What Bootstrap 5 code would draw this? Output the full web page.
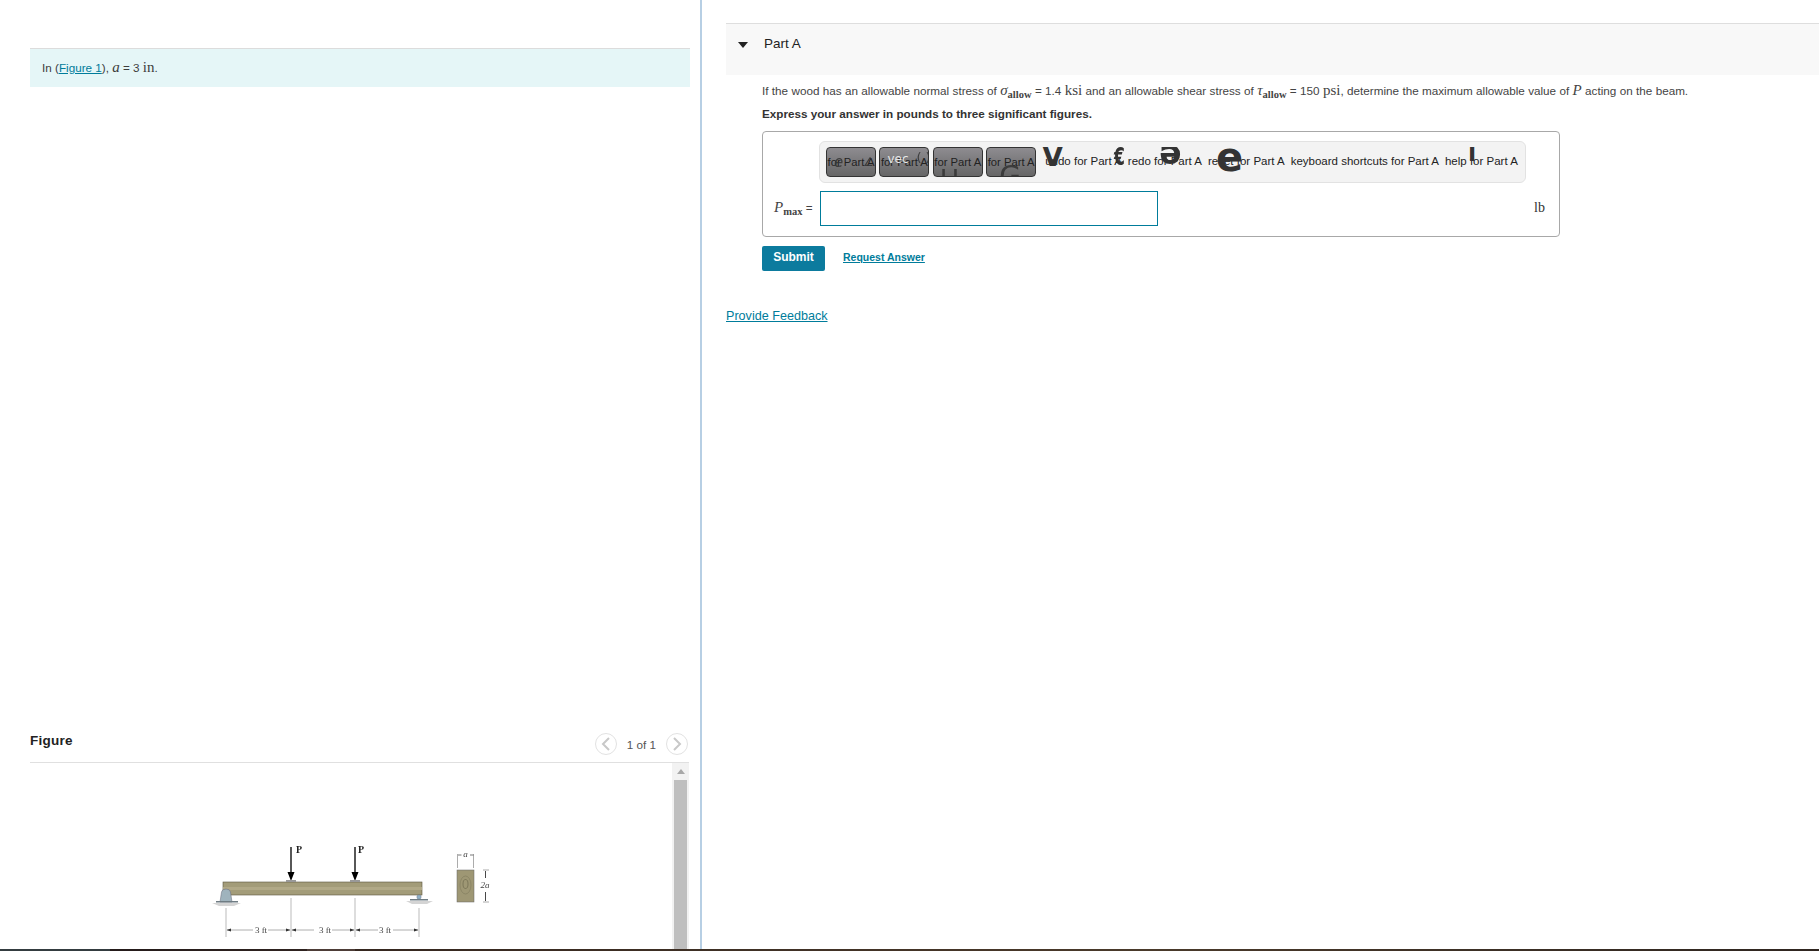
<!DOCTYPE html>
<html lang="en">
<head>
<meta charset="utf-8">
<title>Part A</title>
<link href="https://cdn.jsdelivr.net/npm/bootstrap@5.3.0/dist/css/bootstrap.min.css" rel="stylesheet">
<style>
html,body{height:951px;overflow:hidden;background:#fff;}
body{font-family:"Liberation Sans",Arial,sans-serif;font-size:11.7px;color:#3d3d3d;}
a{color:#007c9b;}
.mth{font-family:"Liberation Serif",serif;font-size:15px;}
.mth i{font-style:italic;}
.mth sub{font-size:10.5px;font-weight:bold;bottom:-.3em;}
.page-wrap{height:951px;}
.main-zone{height:949px;}
.base-strip{height:2px;background:linear-gradient(90deg,#343c40 0,#343c40 110px,#241b1a 110px,#2f2320 307px,#4d3d37 307px,#4d3d37 355px,#35271f 355px,#4a3a2b 1150px,#2f2620 1819px);}
.left-pane{width:702px;border-right:2px solid #b7cfe4;padding:48px 10px 0 30px;}
.intro-band{height:39px;background:#e5f6f7;border-top:1px solid #dcdcdc;padding:0 12px 2px;}
.fig-head{height:30px;border-bottom:1px solid #e0e0e0;padding:0 1px 7px 0;margin-right:1px;}
.fig-title{font-size:13.5px;font-weight:bold;color:#222;letter-spacing:.25px;margin-bottom:5px;}
.circle-nav{width:22px;height:22px;border:1px solid #e2e2e2;border-radius:50%;background:#fff;}
.page-count{margin:2px 2px 0;color:#555;}
.fig-body{height:186px;}
.beam-svg{width:300px;height:186px;margin-left:170px;filter:blur(.4px);}
.beam-svg text{font-family:"Liberation Serif",serif;fill:#444;}
.side-track{width:17px;margin-right:1px;padding:0 2px;background:#f2f2f2;}
.track-arrow{height:17px;}
.track-thumb{background:#bfbfbf;}
.right-pane{padding:23px 0 0 24px;}
.part-head{height:52px;background:#f8f8f8;border-top:1px solid #dedede;padding:0 0 10px 12px;font-size:13.5px;color:#222;}
.part-tri{width:0;height:0;border-left:5px solid transparent;border-right:5px solid transparent;border-top:6px solid #222;margin-right:16px;}
.part-body{padding-left:36px;}
.task-line{height:24px;line-height:30px;color:#444;word-spacing:.12px;}
.task-bold{height:24px;font-weight:bold;line-height:30px;color:#333;}
.answer-box{width:798px;height:106px;margin-top:8px;border:1px solid #a8a8a8;border-radius:4px;padding:9px 14px 0 11px;}
.tool-strip{width:707px;height:42px;margin-left:45px;padding:5px 6px;background:#f3f3f3;border:1px solid #e2e2e2;border-radius:6px;}
.tool-row{height:30px;overflow:hidden;gap:3.4px;}
.tool-cell{height:30px;flex-shrink:0;color:#222;white-space:nowrap;line-height:28px;font-size:11.5px;}
.tool-key{width:50px;border:1px solid #333;border-radius:4px;background:linear-gradient(#8e8c90,#666);text-align:center;overflow:hidden;font-size:11.25px;}
.tool-plain{margin-right:2.6px;}
.tool-first{margin-left:5.6px;}
.tool-glyph{position:absolute;font-family:"DejaVu Sans",sans-serif;font-weight:bold;line-height:1;color:#333;}
.glyph-soft{font-weight:normal;color:#333;opacity:.85;}
.glyph-white{font-weight:normal;color:#e6e6e6;}
.glyph-narrow{transform:scaleX(.65);}
.glyph-flip{transform:rotate(180deg);}
.answer-row{margin-top:8px;height:35px;}
.var-label{width:46px;color:#444;margin-bottom:2px;}
.var-field{width:338px;height:35px;border:1px solid #007c9b;border-radius:0;padding:0 6px;}
.unit-mark{font-family:"Liberation Serif",serif;font-size:14px;color:#333;margin-bottom:2px;}
.act-row{margin-top:9px;}
.send-btn{width:63px;height:25px;padding:0 0 4px;border:0;border-radius:2px;background:#0c7b9e;color:#fff;font-size:12px;font-weight:bold;}
.ask-link{margin:0 0 2px 18px;font-size:10.5px;font-weight:bold;}
.feedback-link{display:inline-block;margin-top:36px;font-size:12.6px;}
.g-a{left:7px;top:7px;font-size:15px;font-style:italic;}
.g-b{left:36px;top:8px;font-size:12px;}
.g-c{left:7px;top:5px;font-size:12px;}
.g-d{left:36px;top:3px;font-size:13px;}
.g-e{left:6px;top:19px;font-size:26px;}
.g-f{left:12px;top:15px;font-size:28px;}
.g-g{left:-3px;top:-4px;font-size:27px;}
.g-h{left:-17px;top:-2px;font-size:24px;}
.g-i{left:31px;top:-7px;font-size:33px;}
.g-j{left:8px;top:-10px;font-size:40px;}
.g-k{left:23px;top:-4px;font-size:22px;}
</style>
</head>
<body class="m-0">
<div class="page-wrap d-flex flex-column">
  <div class="main-zone d-flex">
    <section class="left-pane d-flex flex-column flex-shrink-0">
      <div class="intro-band d-flex align-items-center">
        <span>In (<a href="#">Figure 1</a>), <span class="mth"><i>a</i></span> = 3 <span class="mth">in</span>.</span>
      </div>
      <div class="fig-head d-flex justify-content-between align-items-center mt-auto">
        <span class="fig-title">Figure</span>
        <div class="d-flex align-items-center gap-2">
          <span class="circle-nav d-flex align-items-center justify-content-center"><svg width="10" height="14" viewBox="0 0 10 14"><path d="M8 1 2 7l6 6" fill="none" stroke="#c8c8c8" stroke-width="2"/></svg></span>
          <span class="page-count">1 of 1</span>
          <span class="circle-nav d-flex align-items-center justify-content-center"><svg width="10" height="14" viewBox="0 0 10 14"><path d="M2 1l6 6-6 6" fill="none" stroke="#c8c8c8" stroke-width="2"/></svg></span>
        </div>
      </div>
      <div class="fig-body d-flex justify-content-between">
        <svg class="beam-svg" viewBox="200 763 300 186">
          <rect x="223" y="882" width="199" height="13" fill="#a39c79" stroke="#5b563f" stroke-width=".6"/>
          <rect x="223" y="887" width="199" height="3" fill="#b1a987"/>
          <path d="M291 847v28M355 847v28" stroke="#111" stroke-width="1.400"/>
          <path d="M287.500 872h7l-3.500 9zM351.500 872h7l-3.500 9z" fill="#000"/>
          <rect x="286" y="880" width="10" height="2" fill="#999"/><rect x="350" y="880" width="10" height="2" fill="#999"/>
          <text x="296" y="853" font-size="10" font-weight="bold" style="fill:#222">P</text>
          <text x="358" y="853" font-size="10" font-weight="bold" style="fill:#222">P</text>
          <path d="M220 902l1.500-10q.5-3 4.500-3t4.500 3l1.500 10z" fill="#9fb3bd" stroke="#667" stroke-width=".5"/>
          <rect x="216" y="901" width="22" height="1.500" fill="#6f7c83"/>
          <path d="M212 903h29l-7 3h-15z" fill="#d4d4d4"/>
          <circle cx="419" cy="897" r="2.200" fill="#8fb0c4" stroke="#667" stroke-width=".4"/>
          <rect x="410" y="899" width="18" height="1.500" fill="#6f7c83"/>
          <path d="M406 901h27l-6 3h-15z" fill="#d4d4d4"/>
          <path d="M226 908v29M291 898v39M355 898v39M419 908v29" stroke="#aaa" stroke-width=".8"/>
          <path d="M227 930h26M268 930h22M292 930h22M332 930h22M356 930h22M393 930h25" stroke="#999" stroke-width=".8"/>
          <path d="M231 928.500 226.500 930l4.500 1.500zM286 928.500l4.500 1.500-4.500 1.500zM296 928.500l-4.500 1.500 4.500 1.500zM350 928.500l4.500 1.500-4.500 1.500zM360 928.500l-4.500 1.500 4.500 1.500zM414 928.500l4.500 1.500-4.500 1.500z" fill="#333"/>
          <text x="261" y="933" font-size="9" text-anchor="middle">3 ft</text>
          <text x="325" y="933" font-size="9" text-anchor="middle">3 ft</text>
          <text x="385" y="933" font-size="9" text-anchor="middle">3 ft</text>
          <rect x="457" y="870" width="17" height="32" fill="#9e9774" stroke="#666" stroke-width=".5"/>
          <ellipse cx="465.500" cy="884" rx="2.500" ry="4.500" fill="none" stroke="#6f6a4e" stroke-width=".7"/>
          <ellipse cx="465.500" cy="885" rx="5.500" ry="9" fill="none" stroke="#7f7a5c" stroke-width=".6"/>
          <path d="M457.500 854v14M473.500 854v14M483 870h6M483 902h6" stroke="#888" stroke-width=".7"/>
          <path d="M458 855h3.500M470 855h3.500" stroke="#555" stroke-width=".8"/>
          <path d="M485.500 871v7M485.500 892v9" stroke="#333" stroke-width=".9"/>
          <text x="465.500" y="857" font-size="9" font-style="italic" text-anchor="middle">a</text>
          <text x="485" y="888" font-size="9" font-style="italic" text-anchor="middle">2a</text>
        </svg>
        <div class="side-track d-flex flex-column">
          <div class="track-arrow d-flex align-items-center justify-content-center"><svg width="8" height="5" viewBox="0 0 8 5"><path d="M4 0l4 5H0z" fill="#a8a8a8"/></svg></div>
          <div class="track-thumb flex-grow-1"></div>
        </div>
      </div>
    </section>
    <section class="right-pane flex-grow-1">
      <div class="part-head d-flex align-items-center">
        <span class="part-tri"></span><span>Part A</span>
      </div>
      <div class="part-body">
        <div class="task-line">If the wood has an allowable normal stress of <span class="mth"><i>σ</i><sub>allow</sub></span> = 1.4 <span class="mth">ksi</span> and an allowable shear stress of <span class="mth"><i>τ</i><sub>allow</sub></span> = 150 <span class="mth">psi</span>, determine the maximum allowable value of <span class="mth"><i>P</i></span> acting on the beam.</div>
        <div class="task-bold">Express your answer in pounds to three significant figures.</div>
        <div class="answer-box">
          <div class="tool-strip">
            <div class="tool-row d-flex">
              <span class="tool-cell tool-key position-relative"><span class="tool-glyph glyph-soft g-a">e</span><span class="tool-glyph glyph-soft g-b">∠</span>for Part A</span>
              <span class="tool-cell tool-key position-relative"><span class="tool-glyph glyph-white g-c">vec</span><span class="tool-glyph glyph-soft g-d">( )</span>for Part A</span>
              <span class="tool-cell tool-key position-relative"><span class="tool-glyph glyph-soft g-e">H</span>for Part A</span>
              <span class="tool-cell tool-key position-relative"><span class="tool-glyph glyph-soft g-f">G</span>for Part A</span>
              <span class="tool-cell tool-plain tool-first position-relative"><span class="tool-glyph g-g">V</span>undo for Part A</span>
              <span class="tool-cell tool-plain position-relative"><span class="tool-glyph glyph-narrow g-h">€</span><span class="tool-glyph glyph-flip g-i">e</span>redo for Part A</span>
              <span class="tool-cell tool-plain position-relative"><span class="tool-glyph g-j">e</span>reset for Part A</span>
              <span class="tool-cell tool-plain position-relative">keyboard shortcuts for Part A</span>
              <span class="tool-cell position-relative"><span class="tool-glyph g-k">I</span>help for Part A</span>
            </div>
          </div>
          <div class="answer-row d-flex align-items-center">
            <span class="var-label"><span class="mth"><i>P</i><sub>max</sub></span> =</span>
            <input class="var-field" type="text" aria-label="Pmax">
            <span class="unit-mark ms-auto">lb</span>
          </div>
        </div>
        <div class="act-row d-flex align-items-center">
          <button class="btn send-btn" type="button">Submit</button>
          <a class="ask-link" href="#">Request Answer</a>
        </div>
      </div>
      <a class="feedback-link" href="#">Provide Feedback</a>
    </section>
  </div>
  <div class="base-strip"></div>
</div>
<script src="https://cdn.jsdelivr.net/npm/bootstrap@5.3.0/dist/js/bootstrap.bundle.min.js"></script>
</body>
</html>
